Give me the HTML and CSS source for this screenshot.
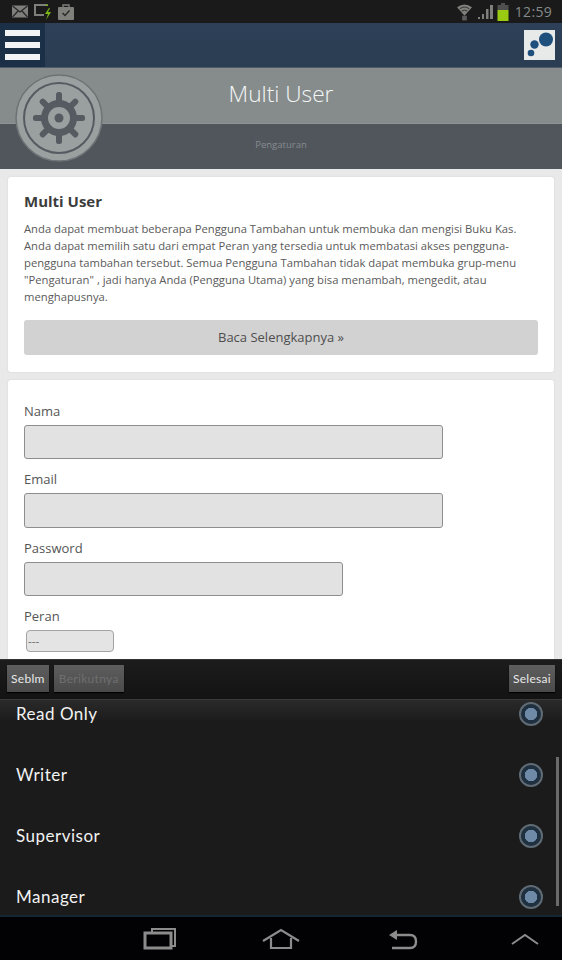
FILE: index.html
```html
<!DOCTYPE html>
<html lang="id">
<head>
<meta charset="utf-8">
<title>Multi User</title>
<link rel="stylesheet" href="styles.css">
</head>
<body>
<div class="screen">
  <div class="status">
    <div class="status-left">
      <svg class="ic" width="16" height="13" viewBox="0 0 16 13"><rect x="0" y="0.500" width="16" height="12" fill="#7f7f7b"/><path d="M.5 1 8 7l7.500-6M.5 12 6 6M15.500 12 10 6" fill="none" stroke="#2b2b2b" stroke-width="1.300"/></svg>
      <svg class="ic up" width="20" height="18" viewBox="0 0 20 18"><path d="M14 2H2v10h9" fill="none" stroke="#7f7f7b" stroke-width="2"/><path d="M15 1v2h-3zM16 5l-4 6h3l-2 6 5-8h-3l2-4z" fill="#7cb518"/></svg>
      <svg class="ic" width="16" height="16" viewBox="0 0 16 16"><rect x="0" y="3" width="16" height="13" rx="1" fill="#7f7f7b"/><path d="M5 3V1h6v2" fill="none" stroke="#7f7f7b" stroke-width="1.400"/><path d="m4.500 9 2.500 2.500L11.500 6.500" fill="none" stroke="#2b2b2b" stroke-width="1.500"/></svg>
    </div>
    <div class="status-right">
      <svg class="ic wifi" width="15" height="18" viewBox="0 0 16 18"><path d="M0 4Q8-2 16 4L8 13z" fill="#7f7f7b"/><path d="M3 5.500Q8 2 13 5.500M5 8q3-2 6 0" fill="none" stroke="#2e2e2e"/><rect x="5.500" y="13" width="5" height="5" fill="#5a5a58"/></svg>
      <svg class="ic" width="15" height="15" viewBox="0 0 15 15"><path d="M0 13h2v2H0zM4 10h2v5H4zM8 5h2.500v10H8zM12 1h3v14h-3z" fill="#7f7f7b"/></svg>
      <svg class="ic" width="12" height="18" viewBox="0 0 12 18"><path d="M4 0h4v2h3.500v5H.5V2H4z" fill="#4f4f4f"/><rect x="0.500" y="7" width="11" height="11" fill="#9acb12"/></svg>
      <span class="clock">12:59</span>
    </div>
  </div>

  <header class="topbar">
    <button class="menu-btn" aria-label="Menu"><span></span><span></span><span></span></button>
    <div class="logo">
      <svg width="31" height="30" viewBox="0 0 31 30"><rect width="31" height="30" fill="#e8eaea"/><circle cx="22" cy="9.500" r="7" fill="#1f4f7d"/><circle cx="10.500" cy="14.500" r="4.200" fill="#1f4f7d"/><circle cx="7" cy="23" r="3.300" fill="#1f4f7d"/></svg>
    </div>
  </header>

  <section class="banner">
    <svg class="gear" width="88" height="88" viewBox="0 0 88 88">
      <circle cx="44" cy="44" r="43" fill="#9a9f9f" stroke="#6d7275" stroke-width="1.500"/>
      <circle cx="44" cy="44" r="35" fill="none" stroke="#565b62" stroke-width="2"/>
      <g fill="#565b62">
        <rect x="41" y="18" width="6" height="52" rx="2.500"/>
        <rect x="41" y="18" width="6" height="52" rx="2.500" transform="rotate(45 44 44)"/>
        <rect x="41" y="18" width="6" height="52" rx="2.500" transform="rotate(90 44 44)"/>
        <rect x="41" y="18" width="6" height="52" rx="2.500" transform="rotate(135 44 44)"/>
        <circle cx="44" cy="44" r="18"/>
      </g>
      <circle cx="44" cy="44" r="11" fill="#9a9f9f"/>
      <circle cx="44" cy="44" r="4.500" fill="#565b62"/>
    </svg>
    <div class="banner-top"><h1>Multi User</h1></div>
    <div class="banner-bottom"><span>Pengaturan</span></div>
  </section>

  <main class="content">
    <section class="card info">
      <h2>Multi User</h2>
      <p>Anda dapat membuat beberapa Pengguna Tambahan untuk membuka dan mengisi Buku Kas.<br>Anda dapat memilih satu dari empat Peran yang tersedia untuk membatasi akses pengguna-<br>pengguna tambahan tersebut. Semua Pengguna Tambahan tidak dapat membuka grup-menu<br>"Pengaturan" , jadi hanya Anda (Pengguna Utama) yang bisa menambah, mengedit, atau<br>menghapusnya.</p>
      <a class="more">Baca Selengkapnya »</a>
    </section>
    <section class="card form">
      <label>Nama</label>
      <div class="field wide"></div>
      <label>Email</label>
      <div class="field wide"></div>
      <label>Password</label>
      <div class="field mid"></div>
      <label>Peran</label>
      <div class="select">---</div>
    </section>
  </main>

  <div class="picker">
    <div class="toolbar">
      <div class="tb-group">
        <span class="tb-btn">Seblm</span>
        <span class="tb-btn off">Berikutnya</span>
      </div>
      <span class="tb-btn">Selesai</span>
    </div>
    <div class="options">
      <div class="opt first"><span>Read Only</span><i class="radio"></i></div>
      <div class="opt"><span>Writer</span><i class="radio"></i></div>
      <div class="opt"><span>Supervisor</span><i class="radio"></i></div>
      <div class="opt"><span>Manager</span><i class="radio"></i></div>
      <div class="scrollbar"></div>
    </div>
  </div>

  <nav class="navbar">
    <svg class="nav-ic a" width="34" height="24" viewBox="0 0 34 24"><path d="M9 5V2h23v17h-3" fill="none" stroke="#8c8c8c" stroke-width="2"/><rect x="2" y="6" width="26" height="15" fill="none" stroke="#8c8c8c" stroke-width="3"/></svg>
    <svg class="nav-ic b" width="38" height="24" viewBox="0 0 38 24"><path d="M1 14 19 3l18 11M9 11v10h20V11" fill="none" stroke="#8c8c8c" stroke-width="2.200"/></svg>
    <svg class="nav-ic c" width="30" height="22" viewBox="0 0 30 22"><path d="M1 6 9 1v10z" fill="#8c8c8c"/><path d="M8 6h14q6 0 6 6.500T22 19H4" fill="none" stroke="#8c8c8c" stroke-width="2.400"/></svg>
    <svg class="nav-ic d" width="28" height="14" viewBox="0 0 28 14"><path d="M1 12 14 3l13 9" fill="none" stroke="#8c8c8c" stroke-width="2"/></svg>
  </nav>
</div>
</body>
</html>
```
FILE: styles.css
```css
* { box-sizing: border-box; }
html, body { margin: 0; padding: 0; }
body { background: #e9e9e9; font-family: "Open Sans", "Liberation Sans", sans-serif; }
.screen { width: 562px; height: 960px; display: flex; flex-direction: column; overflow: hidden; position: relative; }

.status { height: 23px; flex: none; background: #1a1a1a; display: flex; justify-content: space-between; align-items: center; padding: 0 3px 0 12px; }
.status-left, .status-right { display: flex; align-items: center; }
.status-left { gap: 5px; }
.status-right { gap: 4px; }
.ic { display: block; }
.wifi { margin-right: 2px; }
.clock { font-family: "Open Sans", sans-serif; font-size: 14px; color: #858a8a; letter-spacing: 0.3px; margin-left: 2px; margin-right: 7px; }

.topbar { height: 45px; flex: none; background: linear-gradient(#2d4058, #2a3d52); display: flex; justify-content: space-between; align-items: center; padding-right: 7px; border-bottom: 1px solid #4e5a66; }
.menu-btn { width: 45px; height: 44px; background: #1b2f47; border: 0; padding: 0 5px; display: flex; flex-direction: column; justify-content: center; gap: 6px; }
.menu-btn span { display: block; height: 6px; background: #f1f3f4; }
.logo { width: 31px; height: 30px; }
.logo svg { display: block; }

.banner { height: 101px; flex: none; position: relative; display: flex; flex-direction: column; }
.banner-top { height: 56px; background: #868c8c; border-bottom: 1px solid #8e9394; text-align: center; }
.banner-top h1 { margin: 0; padding-top: 9px; font-size: 22.700px; line-height: 34px; font-weight: 300; color: #f4f6f6; }
.banner-bottom { flex: 1; background: #50565c; text-align: center; padding-top: 14px; }
.banner-bottom span { display: block; font-size: 9.500px; line-height: 14px; color: #868b90; }
.gear { position: absolute; left: 14.500px; top: 6px; }

.content { flex: 1; min-height: 0; overflow: hidden; padding: 8px 8px 0; display: flex; flex-direction: column; gap: 8px; background: #e9e9e9; }
.card { background: #fff; border-radius: 3px; padding: 0 16px; box-shadow: 0 0 2px #d0d0d0; flex: none; }
.info { height: 195px; padding-top: 14px; }
.info h2 { margin: 0 0 9px; font-size: 15px; line-height: 20px; font-weight: 700; color: #3c3c3c; }
.info p { margin: 0 0 15px; font-size: 11.250px; line-height: 17px; color: #5a5a5a; white-space: nowrap; }
.more { display: block; height: 35px; border-radius: 3px; background: #d2d2d2; text-align: center; font-size: 13px; line-height: 35px; color: #4e4e4e; }

.form { height: 300px; padding-top: 21px; }
.form label { display: block; font-size: 13px; line-height: 20px; color: #555; margin-bottom: 4px; }
.field { height: 34.400px; background: #e2e2e2; border: 1px solid #8e8e8e; border-radius: 3px; margin-bottom: 10px; }
.wide { width: 418.500px; }
.mid { width: 318.500px; }
.select { width: 88px; height: 22px; margin: 0 0 0 2px; background: #e4e4e4; border: 1px solid #a3a3a3; border-radius: 4px; font-size: 11.500px; line-height: 20px; color: #666; padding-left: 1px; }

.picker { flex: none; height: 256px; background: #1b1b1b; display: flex; flex-direction: column; border-top: 1px solid #333; }
.toolbar { height: 40px; flex: none; background: linear-gradient(#1c1c1c, #131313); border-bottom: 1px solid #3a3a3a; display: flex; justify-content: space-between; align-items: center; padding: 0 7px 2px; }
.tb-group { display: flex; gap: 5px; }
.tb-btn { height: 27px; padding: 0 4px; background: linear-gradient(#5e5e5e, #4a4a4a); box-shadow: 0 1px 1px #000; font-family: "Lato", sans-serif; font-size: 12px; line-height: 27px; letter-spacing: 0.3px; color: #e8e8e8; }
.tb-btn.off { color: #6f6f6f; padding: 0 5px; letter-spacing: 0.3px; }
.options { flex: 1; min-height: 0; position: relative; overflow: hidden; background: linear-gradient(#2a2a2a, #1b1b1b 22px); }
.opt { height: 61px; display: flex; justify-content: space-between; align-items: center; padding: 0 19px 0 16px; font-family: "Lato", sans-serif; font-size: 17px; letter-spacing: 0.5px; color: #f2f2f2; }
.first { margin-top: -17px; }
.radio { display: block; width: 24px; height: 24px; border-radius: 50%; background: radial-gradient(circle, #6f8aa6 0 6px, #1f3040 6.500px 9.500px, transparent 10px); border: 2px solid #5f6c76; }
.scrollbar { position: absolute; right: 3px; top: 57px; width: 3px; height: 149px; background: #6a6a6a; }

.navbar { height: 45px; flex: none; background: #020204; border-top: 2px solid #14262f; display: flex; align-items: center; padding-left: 143px; }
.nav-ic { display: block; flex: none; }
.nav-ic.a { margin-top: 0; }
.nav-ic.b { margin-left: 85px; }
.nav-ic.c { margin-left: 88px; margin-top: 3px; }
.nav-ic.d { margin-left: 93px; margin-top: 1px; }
```
